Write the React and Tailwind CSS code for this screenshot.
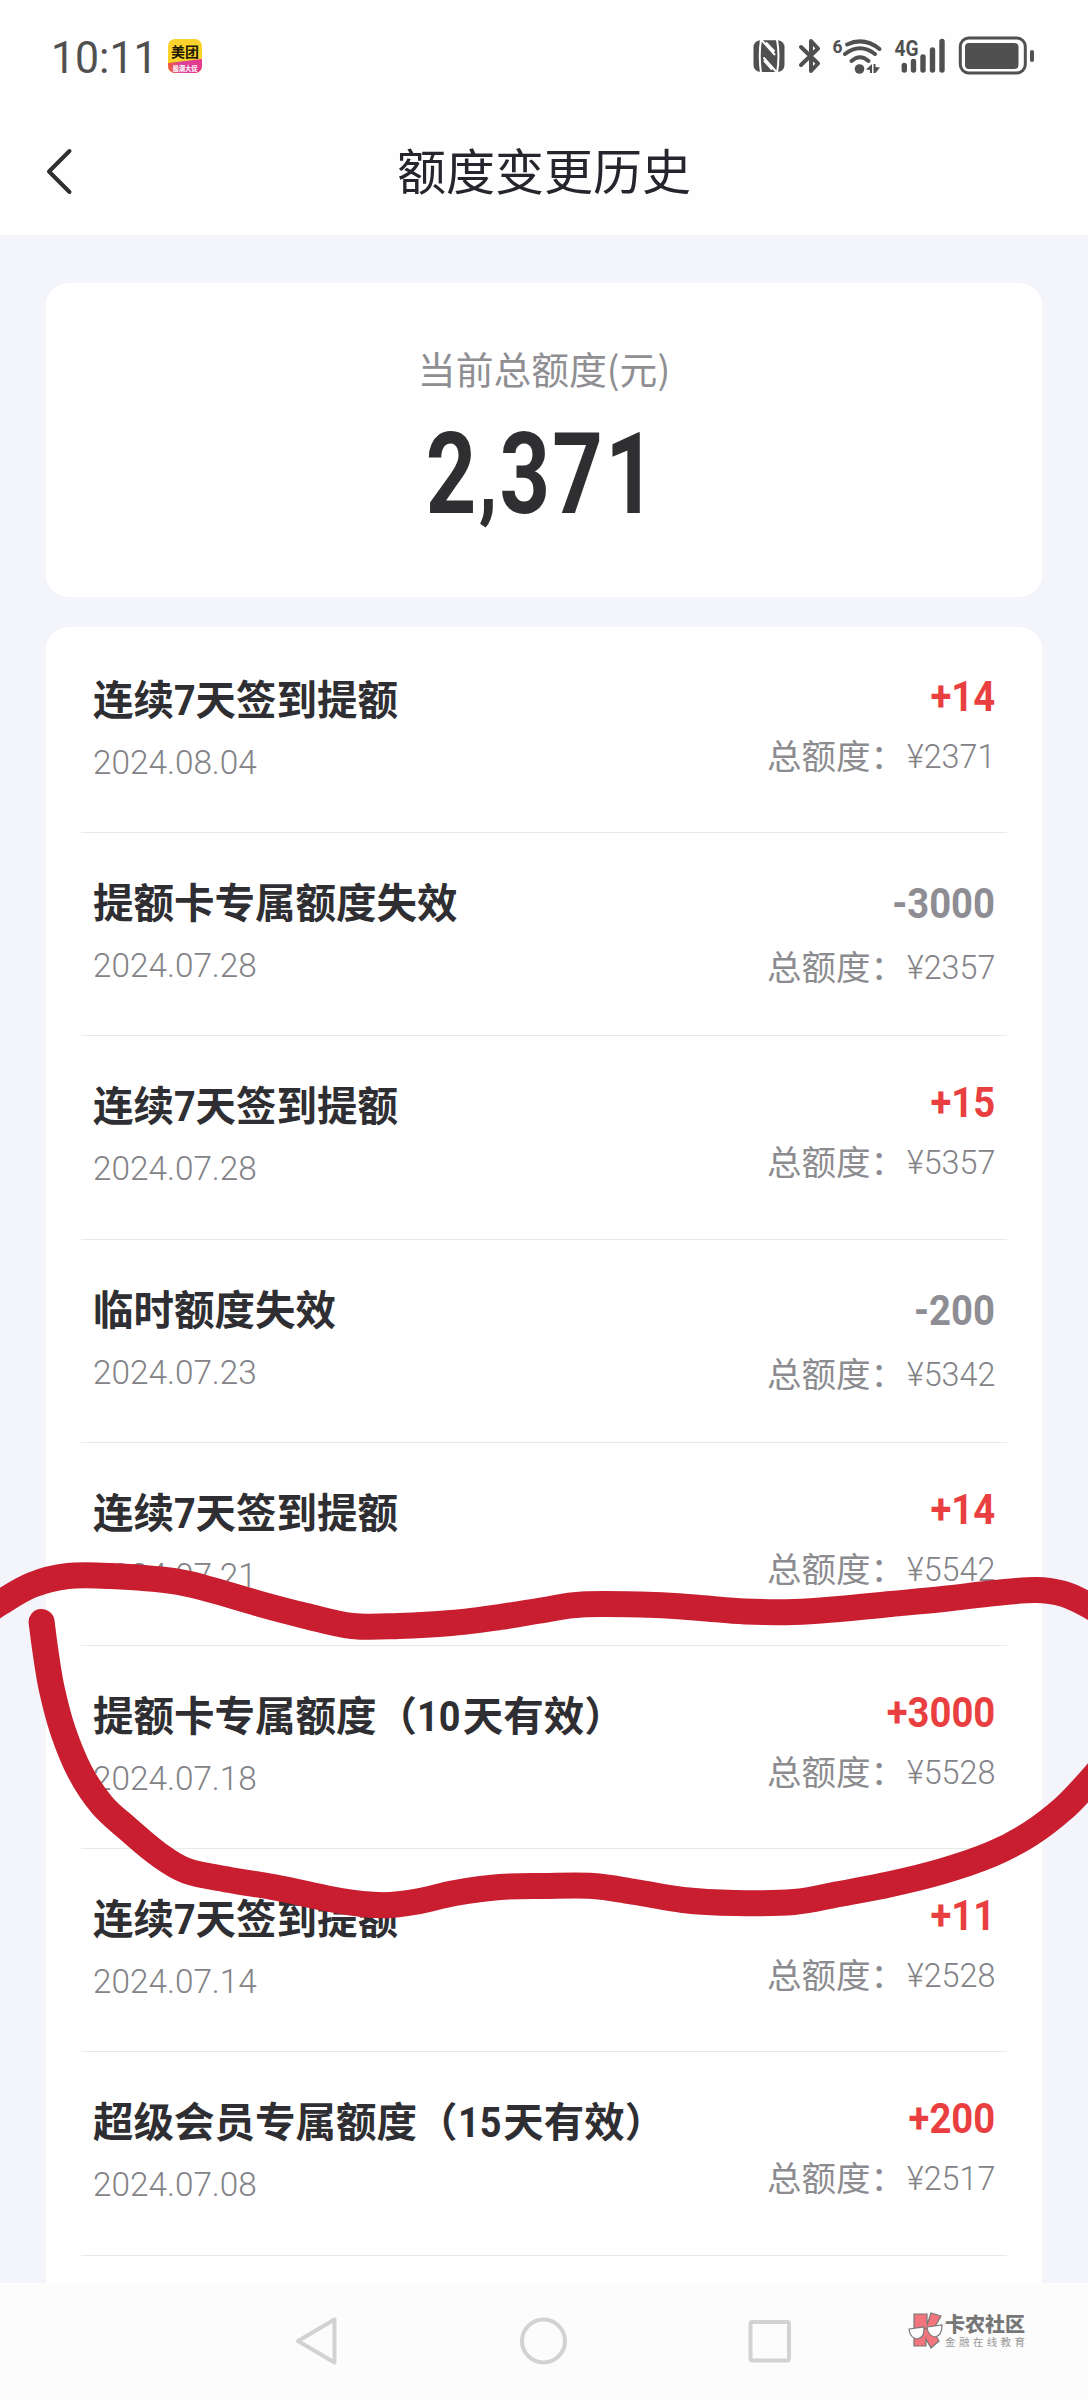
import React from "react";

const rows = [
  { title: ["连续", "7", "天签到提额"], date: "2024.08.04", delta: "+14", total: "2371" },
  { title: ["提额卡专属额度失效"], date: "2024.07.28", delta: "-3000", total: "2357" },
  { title: ["连续", "7", "天签到提额"], date: "2024.07.28", delta: "+15", total: "5357" },
  { title: ["临时额度失效"], date: "2024.07.23", delta: "-200", total: "5342" },
  { title: ["连续", "7", "天签到提额"], date: "2024.07.21", delta: "+14", total: "5542" },
  { title: ["提额卡专属额度（", "10", "天有效）"], date: "2024.07.18", delta: "+3000", total: "5528" },
  { title: ["连续", "7", "天签到提额"], date: "2024.07.14", delta: "+11", total: "2528" },
  { title: ["超级会员专属额度（", "15", "天有效）"], date: "2024.07.08", delta: "+200", total: "2517" },
];

const upper = [[-22, 1618], [0, 1603], [32, 1585], [68, 1576], [111, 1576], [173, 1581], [212, 1590], [260, 1604], [306, 1616], [352, 1626], [399, 1626], [451, 1623], [500, 1617], [544, 1610], [582, 1604.5], [655, 1605], [700, 1608], [745, 1611.5], [794, 1612], [839, 1609], [891, 1604], [943, 1599], [995, 1593], [1036, 1590], [1064, 1594], [1088, 1605], [1106, 1616]];
const lower = [[41.6, 1622], [46, 1655], [52, 1690], [63, 1731], [80, 1772], [102, 1805], [128, 1829], [158, 1854], [187, 1871], [230, 1880], [278, 1888], [330, 1899], [362, 1904], [390, 1905], [420, 1901], [455, 1893], [500, 1887], [544, 1886], [593, 1886], [635, 1892], [683, 1900], [735, 1903], [794, 1902], [839, 1894], [891, 1884], [943, 1871], [992, 1854], [1030, 1834], [1064, 1808], [1088, 1783], [1106, 1762]];

function smooth(p) {
  let d = `M${p[0][0]} ${p[0][1]}`;
  for (let i = 0; i < p.length - 1; i++) {
    const a = p[i - 1] || p[i];
    const b = p[i];
    const c = p[i + 1];
    const e = p[i + 2] || c;
    d += `C${b[0] + (c[0] - a[0]) / 6} ${b[1] + (c[1] - a[1]) / 6} ${c[0] - (e[0] - b[0]) / 6} ${c[1] - (e[1] - b[1]) / 6} ${c[0]} ${c[1]}`;
  }
  return d;
}

function StatusBar() {
  return (
    <div className="flex h-[112px] items-center pl-[51px] pr-[54px] text-[#505050]">
      <span className="mt-[4px] w-[117px] whitespace-nowrap font-['Roboto'] text-[45px] leading-[48px]">
        <span className="inline-block origin-left scale-x-[0.95]">10:11</span>
      </span>
      <div className="relative h-[34px] w-[34px] overflow-hidden rounded-[7px] bg-[#fbd22b]">
        <svg className="absolute inset-0" width="34" height="34" viewBox="0 0 34 34">
          <defs>
            <linearGradient id="promo">
              <stop offset="0" stopColor="#f0603c" />
              <stop offset=".4" stopColor="#d8409c" />
              <stop offset="1" stopColor="#e83a8c" />
            </linearGradient>
          </defs>
          <path d="M0 24L34 20V34H0Z" fill="url(#promo)" />
        </svg>
        <div className="relative whitespace-nowrap text-center text-[14px] font-bold leading-[24px] text-[#201800]">美团</div>
        <div className="absolute bottom-0 left-[-6px] w-[46px] scale-[0.9] whitespace-nowrap text-center text-[7px] font-bold leading-[10px] text-white">最潮大促</div>
      </div>
      <svg className="ml-auto" width="284" height="44" viewBox="750 34 284 44" fill="currentColor">
        <rect x="753.500" y="40.300" width="31" height="31.700" rx="7" />
        <g fill="none" stroke="#fefefe" strokeWidth="2">
          <path d="M761 39.500Q758.500 56 761 73M762 40.500L775 55M766 42.500L774.500 51.500" />
          <path d="M777 39.500Q780 56 777 73M776 71.500L763.500 57.500M772 69.500L764 60.500" />
        </g>
        <path d="M801 47L818 63.500L811 71V41L818 48.500L801 65" fill="none" stroke="currentColor" strokeWidth="4" strokeLinejoin="round" strokeLinecap="round" />
        <text x="832.500" y="53" className="font-['Roboto'] text-[19px] font-bold" textLength="10" lengthAdjust="spacingAndGlyphs">6</text>
        <g fill="none" stroke="currentColor" strokeWidth="4" strokeLinecap="round">
          <path d="M847 44.500Q864 36.500 879.500 49" />
          <path d="M845 54Q860 42.500 875 54" />
          <path d="M851.500 61Q860 53.500 868.500 61" />
        </g>
        <circle cx="859.500" cy="69" r="4.800" />
        <path d="M872 64V73H870V70L866 69.500ZM873.500 64H875.500V67L880 67.500L875.500 73H873.500Z" />
        <text x="894.500" y="56" className="font-['Roboto'] text-[22px] font-bold" textLength="24" lengthAdjust="spacingAndGlyphs">4G</text>
        <g stroke="currentColor" strokeWidth="5.400" strokeLinecap="round">
          <path d="M904.300 65.500V70M913.500 61.500V70M923 57V70M932.500 50V70M942 41.500V70" />
        </g>
        <rect x="960.300" y="38" width="65" height="35" rx="8.500" fill="none" stroke="currentColor" strokeWidth="3" />
        <rect x="965" y="43" width="53.500" height="26" rx="4" />
        <rect x="1030" y="50" width="4" height="12" rx="2" />
      </svg>
    </div>
  );
}

function Row({ row }) {
  const up = row.delta[0] === "+";
  return (
    <li className="mx-[35px] flex h-[203.200px] justify-between border-b border-[#e9e9ea] pl-[12px] pr-[12px]">
      <div className="pt-[42px]">
        <h2 className="h-[56px] whitespace-nowrap text-[40.500px] font-bold leading-[52px] text-[#2f2f33]">
          {row.title.map((part, i) =>
            i === 1 ? (
              <span key={i} className="-mr-[0.060em] inline-block origin-left scale-x-[0.9] font-['Roboto'] text-[42px] leading-[52px]">
                {part}
              </span>
            ) : (
              <span key={i}>{part}</span>
            )
          )}
        </h2>
        <p className="mt-[14px] origin-left scale-x-[0.98] whitespace-nowrap font-['Roboto'] text-[34px] font-light leading-[40px] text-[#838387]">{row.date}</p>
      </div>
      <div className={up ? "flex flex-col items-end pt-[43px]" : "flex flex-col items-end pt-[47px]"}>
        <p
          className={
            up
              ? "origin-right scale-x-[0.91] whitespace-nowrap font-['Roboto'] text-[42px] font-bold leading-[48px] text-[#ea3f40]"
              : "origin-right scale-x-[0.91] whitespace-nowrap font-['Roboto'] text-[42px] font-bold leading-[48px] text-[#8e8d94]"
          }
        >
          {row.delta}
        </p>
        <p className={up ? "mt-[11px] flex whitespace-nowrap leading-[44px] text-[#8c8c90]" : "mt-[15px] flex whitespace-nowrap leading-[44px] text-[#8c8c90]"}>
          <span className="text-[34.500px]">总额度：</span>
          <span className="w-[90px] pt-[2px]">
            <span className="inline-block origin-left translate-x-[2px] scale-x-[0.95] font-['Roboto'] text-[34px] font-light text-[#838387]">¥{row.total}</span>
          </span>
        </p>
      </div>
    </li>
  );
}

function NavBar() {
  return (
    <nav className="absolute inset-x-0 bottom-0 flex h-[117px] bg-[#fcfcfc]">
      <div className="ml-[294px] mt-[32px] flex h-[50px] w-[498px] items-center justify-between">
        <svg width="46" height="50" viewBox="0 0 46 50" fill="none" stroke="#d2d2d2" strokeWidth="4" strokeLinejoin="round">
          <path d="M4 26L40.500 4.500V47.500Z" />
        </svg>
        <svg width="50" height="50" viewBox="0 0 50 50" fill="none" stroke="#d2d2d2" strokeWidth="4">
          <circle cx="25.500" cy="26" r="21.500" />
        </svg>
        <svg width="46" height="50" viewBox="0 0 46 50" fill="none" stroke="#d2d2d2" strokeWidth="4">
          <rect x="4.500" y="7" width="38.500" height="38.500" rx="2" />
        </svg>
      </div>
      <div className="ml-[116px] mt-[28px] flex">
        <svg width="38" height="40" viewBox="0 0 38 40" stroke="#777" strokeWidth="1.200">
          <path d="M6 3H19V14L23 2L33 5L25 19L31 30L23 37L18 28V35H6Z" fill="#f2747c" />
          <path d="M1 18L16 16Q17 27 9 28Q2 27 1 18ZM19 16L34 14Q34 25 27 26Q20 25 19 16Z" fill="#fcfcfc" />
          <path d="M16 18L19 17" fill="none" />
        </svg>
        <div className="-ml-[1px] mt-[2px] whitespace-nowrap">
          <div className="text-[20px] font-black leading-[22px] text-[#777]">卡农社区</div>
          <div className="text-[10.500px] tracking-[3.400px] leading-[14px] text-[#999]">金融在线教育</div>
        </div>
      </div>
    </nav>
  );
}

export default function App() {
  return (
    <main className="relative h-[2400px] w-[1088px] overflow-hidden bg-[#f4f5fa] font-['Noto_Sans_CJK_SC',sans-serif]">
      <header className="h-[235px] bg-[#fefefe]">
        <StatusBar />
        <div className="grid h-[120px] grid-cols-[100px_1fr_100px] items-center">
          <svg className="ml-[44px]" width="32" height="50" viewBox="0 0 32 50" fill="none" stroke="#303033" strokeWidth="4" strokeLinecap="round" strokeLinejoin="round">
            <path d="M25.500 4L5 24.500L25.500 45" />
          </svg>
          <h1 className="pb-[7px] text-center text-[49px] leading-[60px] text-[#26252e]">额度变更历史</h1>
        </div>
      </header>
      <section className="mx-[46px] mt-[48px] flex h-[314px] flex-col items-center rounded-[22px] bg-white pt-[60px]">
        <p className="text-[37.800px] leading-[50px] text-[#8f8f93]">当前总额度(元)</p>
        <p className="mt-[22px] -translate-x-[2px] scale-x-[0.78] whitespace-nowrap font-['Roboto'] text-[113px] font-bold leading-[120px] tracking-[3px] text-[#2f2f32]">
          2<span className="relative -top-[3px] text-[96px] leading-none">,</span>371
        </p>
      </section>
      <ul className="mx-[46px] mt-[30px] rounded-t-[22px] bg-white pt-[3px]">
        {rows.map((row, i) => (
          <Row key={i} row={row} />
        ))}
        <li className="h-[40px]" />
      </ul>
      <svg className="pointer-events-none absolute inset-0" width="1088" height="2400" viewBox="0 0 1088 2400" fill="none" stroke="#c81e30" strokeWidth="26" strokeLinecap="round" strokeLinejoin="round">
        <path d={smooth(upper)} />
        <path d={smooth(lower)} />
      </svg>
      <NavBar />
    </main>
  );
}
